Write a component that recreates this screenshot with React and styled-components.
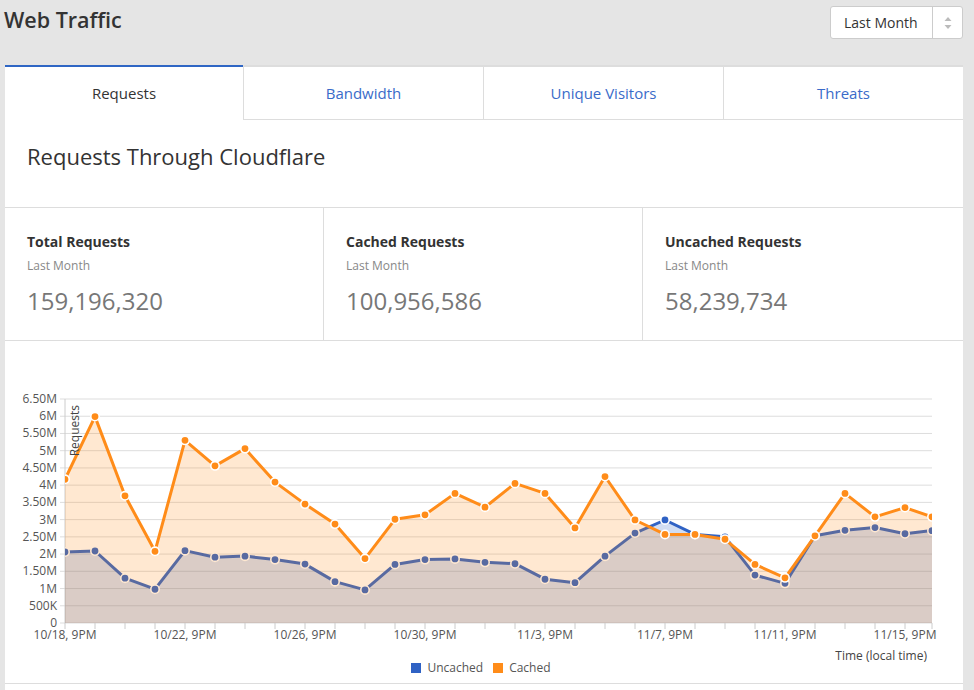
import React from 'react'
import styled, { createGlobalStyle } from 'styled-components'

const GlobalStyle = createGlobalStyle`
  html, body {
    margin: 0;
    background: #e5e5e5;
    font-family: 'Open Sans', 'Liberation Sans', sans-serif;
    color: #333;
  }
`

const Page = styled.div`
  padding: 0 11px 0 5px;
`

const Header = styled.div`
  display: flex;
  justify-content: space-between;
  align-items: flex-start;
  height: 65px;
`

const Title = styled.h1`
  margin: 6px 0 0 -1px;
  font-size: 21.5px;
  line-height: 28px;
  font-weight: 600;
  color: #333;
`

const Select = styled.div`
  margin-top: 6px;
  display: flex;
  height: 31px;
  border: 1px solid #ccc;
  border-radius: 3px;
  background: #fff;
`

const SelectLabel = styled.span`
  display: flex;
  align-items: center;
  padding: 0 12px 0 13px;
  width: 76px;
  font-size: 14px;
  color: #333;
  border-right: 1px solid #ccc;
`

const SelectArrows = styled.span`
  display: flex;
  align-items: center;
  justify-content: center;
  width: 29px;
`

const Card = styled.div`
  background: #fff;
`

const Tabs = styled.div`
  display: grid;
  grid-template-columns: 238px 240px 240px 240px;
`

const Tab = styled.div`
  height: 52px;
  display: flex;
  align-items: center;
  justify-content: center;
  font-size: 15px;
  color: ${p => (p.active ? '#333' : '#3a6bc9')};
  border-top: 2px solid ${p => (p.active ? '#2f66c4' : '#ddd')};
  border-bottom: 1px solid ${p => (p.active ? 'transparent' : '#ddd')};
  border-left: ${p => (p.first ? 'none' : '1px solid #ddd')};
`

const Heading = styled.h2`
  margin: 0;
  padding: 21px 22px 36px;
  font-size: 22px;
  line-height: 30px;
  font-weight: 400;
  color: #333;
  border-bottom: 1px solid #ddd;
`

const Stats = styled.div`
  display: grid;
  grid-template-columns: 318px 319px 321px;
  border-bottom: 1px solid #ddd;
`

const Stat = styled.div`
  padding: 24px 22px 23px;
  border-left: ${p => (p.first ? 'none' : '1px solid #ddd')};
`

const StatLabel = styled.div`
  font-size: 14px;
  line-height: 20px;
  font-weight: 700;
  color: #333;
`

const StatPeriod = styled.div`
  margin-top: 5px;
  font-size: 12px;
  line-height: 18px;
  color: #888;
`

const StatValue = styled.div`
  margin-top: 10px;
  font-size: 24px;
  line-height: 32px;
  color: #777;
`

const ChartSection = styled.div`
  height: 342px;
  border-bottom: 1px solid #ddd;
  display: flex;
  flex-direction: column;
`

const ChartSvg = styled.svg`
  display: block;
  overflow: visible;
  font-family: 'Open Sans', 'Liberation Sans', sans-serif;
`

const Legend = styled.div`
  display: flex;
  justify-content: center;
  gap: 10px;
  margin-top: 1px;
  margin-left: -6px;
  font-size: 12px;
  line-height: 16px;
  color: #555;
`

const LegendItem = styled.span`
  display: flex;
  align-items: center;
  gap: 6px;
`

const Swatch = styled.span`
  width: 10px;
  height: 10px;
  background: ${p => p.color};
`

const Rest = styled.div`
  height: 20px;
`

const cached = [4.17, 5.99, 3.69, 2.08, 5.3, 4.56, 5.06, 4.09, 3.45, 2.87, 1.87, 3.01, 3.14, 3.76, 3.36, 4.05, 3.76, 2.76, 4.25, 2.99, 2.57, 2.57, 2.43, 1.7, 1.31, 2.53, 3.76, 3.08, 3.35, 3.08]
const uncached = [2.06, 2.09, 1.3, 0.98, 2.1, 1.91, 1.94, 1.84, 1.71, 1.2, 0.96, 1.7, 1.84, 1.86, 1.76, 1.72, 1.27, 1.17, 1.94, 2.61, 2.99, 2.57, 2.5, 1.39, 1.15, 2.53, 2.69, 2.77, 2.59, 2.68]

const ORANGE = '#ff8c19'
const BLUE = '#2f62c4'
const LEFT = 60
const RIGHT = 927
const TOP = 58
const BOTTOM = 282

const xAt = i => (i === 29 ? RIGHT : LEFT + 30 * i)
const yAt = v => BOTTOM - (v / 6.5) * (BOTTOM - TOP)

const yTicks = ['0', '500K', '1M', '1.50M', '2M', '2.50M', '3M', '3.50M', '4M', '4.50M', '5M', '5.50M', '6M', '6.50M']
const xLabels = ['10/18, 9PM', '10/22, 9PM', '10/26, 9PM', '10/30, 9PM', '11/3, 9PM', '11/7, 9PM', '11/11, 9PM', '11/15, 9PM']

const linePath = data => data.map((v, i) => `${i ? 'L' : 'M'}${xAt(i)},${yAt(v).toFixed(1)}`).join(' ')
const areaPath = data => `${linePath(data)} L${RIGHT},${BOTTOM} L${LEFT},${BOTTOM} Z`

const Series = ({ data, color, fill }) => (
  <g clipPath="url(#plot)">
    <path d={areaPath(data)} fill={fill} />
    <path d={linePath(data)} fill="none" stroke={color} strokeWidth="3" strokeLinejoin="round" />
    {data.map((v, i) => (
      <circle key={i} cx={xAt(i)} cy={yAt(v)} r="4.2" fill={color} stroke="#fff" strokeWidth="1.6" />
    ))}
  </g>
)

const Chart = () => (
  <ChartSvg width="958" height="318" viewBox="0 0 958 318">
    <defs>
      <clipPath id="plot">
        <rect x={LEFT} y={TOP - 10} width={RIGHT - LEFT} height={BOTTOM - TOP + 20} />
      </clipPath>
    </defs>
    {yTicks.map((t, k) => {
      const y = yAt(k * 0.5)
      return (
        <g key={t}>
          <line x1={LEFT - 5} x2={RIGHT} y1={y} y2={y} stroke="#ddd" strokeWidth="1" />
          <text x={LEFT - 8} y={y + 4} textAnchor="end" fontSize="12" fill="#555">
            {t}
          </text>
        </g>
      )
    })}
    <line x1={LEFT} x2={LEFT} y1={TOP} y2={BOTTOM} stroke="#ccc" />
    {cached.map((_, i) => (
      <line key={i} x1={xAt(i)} x2={xAt(i)} y1={BOTTOM} y2={BOTTOM + 6} stroke="#ccc" />
    ))}
    {xLabels.map((l, k) => (
      <text key={l} x={xAt(k * 4)} y={BOTTOM + 16} textAnchor="middle" fontSize="12" fill="#555">
        {l}
      </text>
    ))}
    <Series data={uncached} color={BLUE} fill="rgba(47,98,196,0.22)" />
    <Series data={cached} color={ORANGE} fill="rgba(255,140,25,0.2)" />
    <text transform={`translate(74,64) rotate(-90)`} textAnchor="end" fontSize="12" fill="#444">
      Requests
    </text>
    <text x="922" y="319" textAnchor="end" fontSize="12" fill="#444">
      Time (local time)
    </text>
  </ChartSvg>
)

const stats = [
  { label: 'Total Requests', value: '159,196,320' },
  { label: 'Cached Requests', value: '100,956,586' },
  { label: 'Uncached Requests', value: '58,239,734' },
]

const tabs = ['Requests', 'Bandwidth', 'Unique Visitors', 'Threats']

const Arrows = () => (
  <svg width="8" height="14" viewBox="0 0 8 14">
    <path d="M4 1 L7.5 5 H0.5 Z" fill="#bbb" />
    <path d="M4 13 L7.5 9 H0.5 Z" fill="#bbb" />
  </svg>
)

export default function App() {
  return (
    <Page>
      <GlobalStyle />
      <Header>
        <Title>Web Traffic</Title>
        <Select>
          <SelectLabel>Last Month</SelectLabel>
          <SelectArrows>
            <Arrows />
          </SelectArrows>
        </Select>
      </Header>
      <Card>
        <Tabs>
          {tabs.map((t, i) => (
            <Tab key={t} active={i === 0} first={i === 0}>
              {t}
            </Tab>
          ))}
        </Tabs>
        <Heading>Requests Through Cloudflare</Heading>
        <Stats>
          {stats.map((s, i) => (
            <Stat key={s.label} first={i === 0}>
              <StatLabel>{s.label}</StatLabel>
              <StatPeriod>Last Month</StatPeriod>
              <StatValue>{s.value}</StatValue>
            </Stat>
          ))}
        </Stats>
        <ChartSection>
          <Chart />
          <Legend>
            <LegendItem>
              <Swatch color={BLUE} />
              Uncached
            </LegendItem>
            <LegendItem>
              <Swatch color={ORANGE} />
              Cached
            </LegendItem>
          </Legend>
        </ChartSection>
        <Rest />
      </Card>
    </Page>
  )
}
